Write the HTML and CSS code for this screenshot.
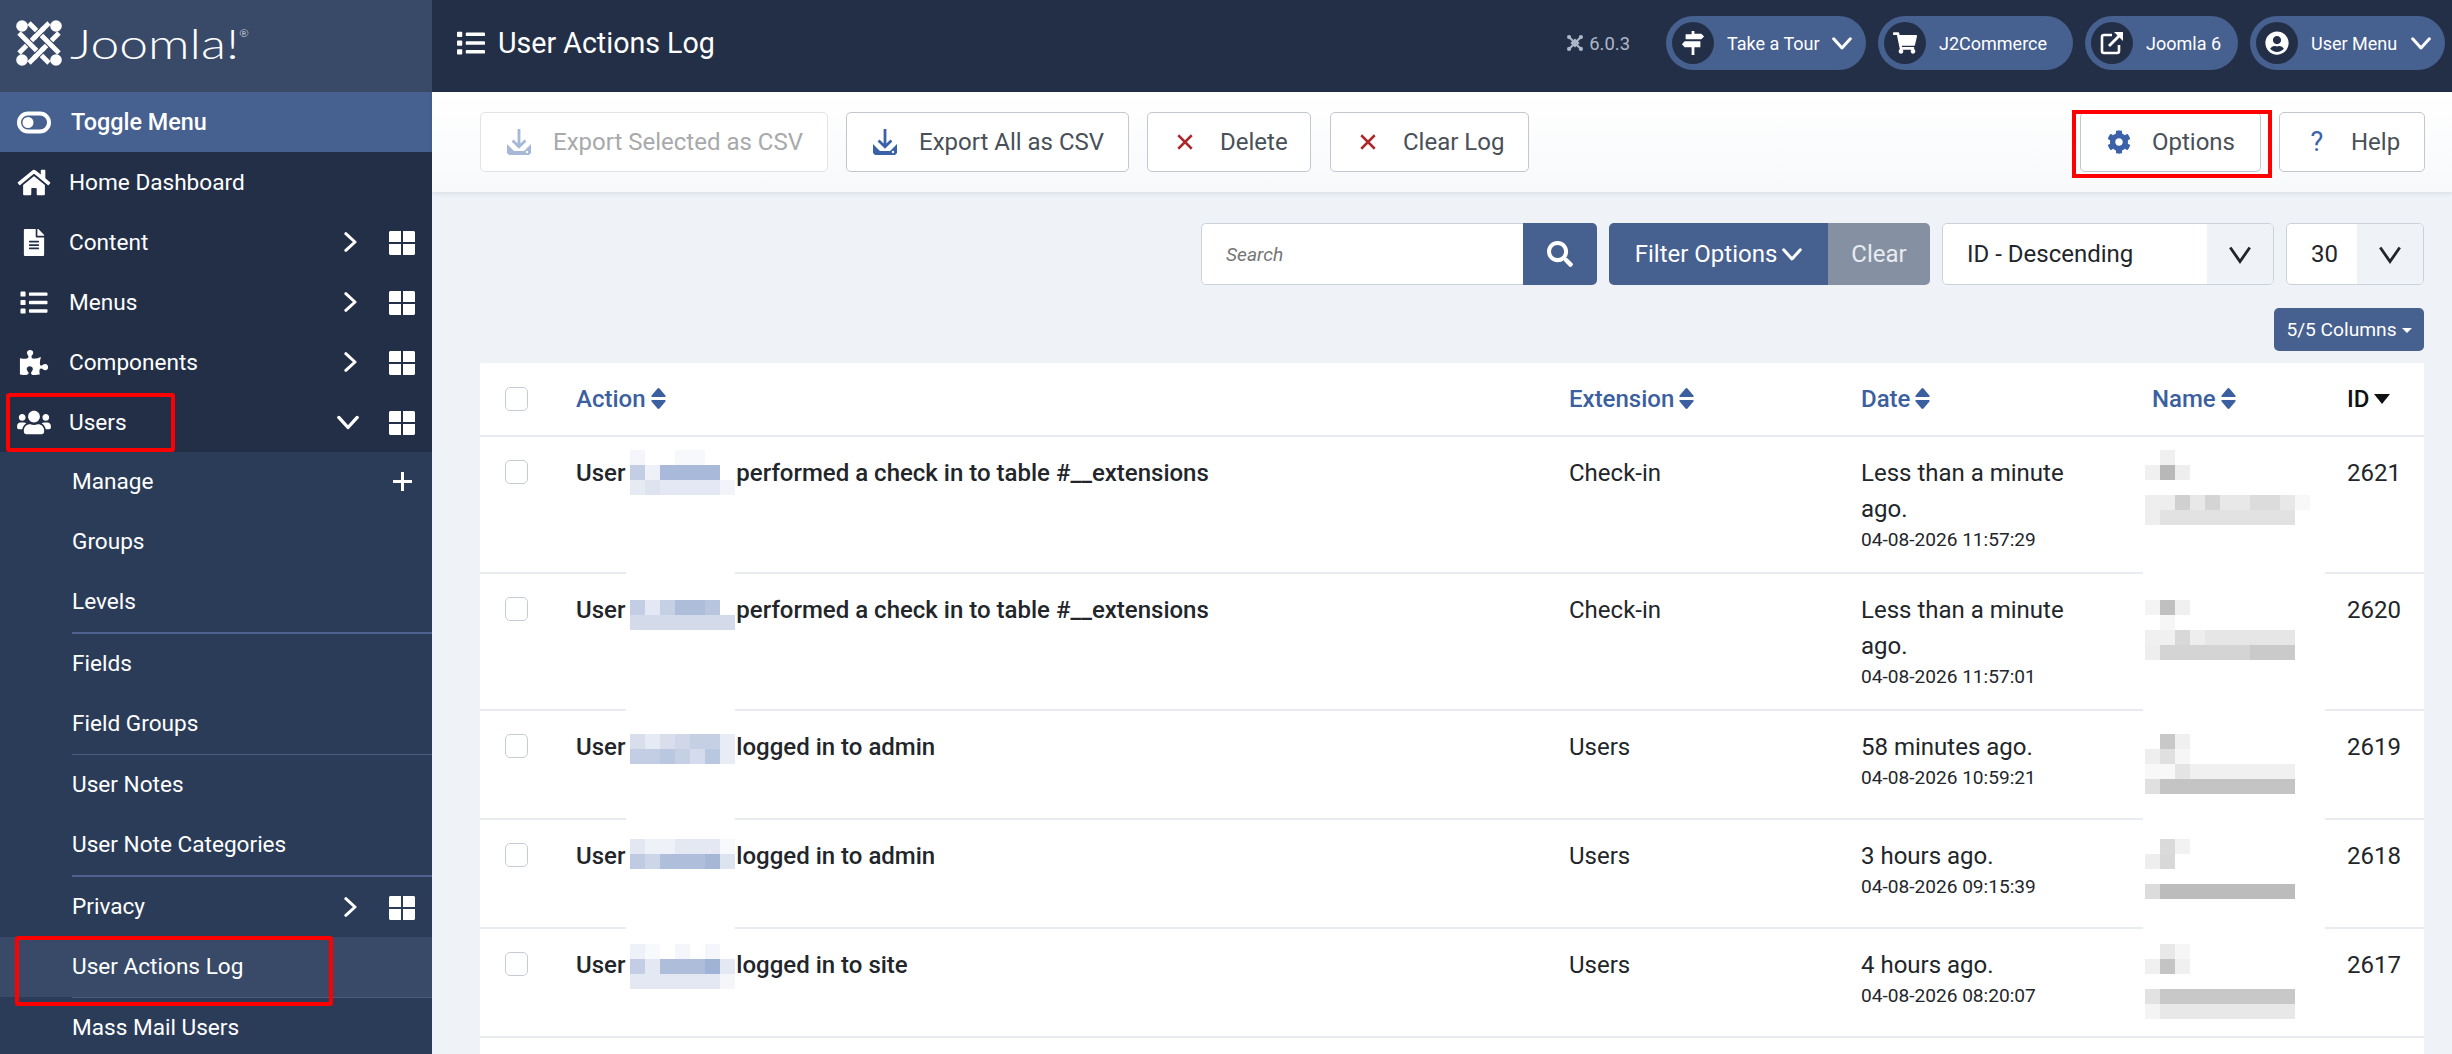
FILE: index.html
```html
<!DOCTYPE html>
<html lang="en">
<head>
	<meta charset="UTF-8">
	<title>User Actions Log</title>
	<link rel="stylesheet" href="styles.css">
</head>
<body>
	<svg class="defs" width="0" height="0">
		<symbol id="i-list" viewBox="0 0 512 512"><path d="M80 368H16a16 16 0 0 0-16 16v64a16 16 0 0 0 16 16h64a16 16 0 0 0 16-16v-64a16 16 0 0 0-16-16zm0-320H16A16 16 0 0 0 0 64v64a16 16 0 0 0 16 16h64a16 16 0 0 0 16-16V64a16 16 0 0 0-16-16zm0 160H16a16 16 0 0 0-16 16v64a16 16 0 0 0 16 16h64a16 16 0 0 0 16-16v-64a16 16 0 0 0-16-16zm416 176H176a16 16 0 0 0-16 16v32a16 16 0 0 0 16 16h320a16 16 0 0 0 16-16v-32a16 16 0 0 0-16-16zm0-320H176a16 16 0 0 0-16 16v32a16 16 0 0 0 16 16h320a16 16 0 0 0 16-16V80a16 16 0 0 0-16-16zm0 160H176a16 16 0 0 0-16 16v32a16 16 0 0 0 16 16h320a16 16 0 0 0 16-16v-32a16 16 0 0 0-16-16z"/></symbol>
		<symbol id="i-right" viewBox="0 0 24 24"><path d="M7 2l11 10L7 22" fill="none" stroke="currentColor" stroke-width="3.6" stroke-linecap="round" stroke-linejoin="round"/></symbol>
		<symbol id="i-down" viewBox="0 0 24 24"><path d="M2 7l10 11L22 7" fill="none" stroke="currentColor" stroke-width="3.6" stroke-linecap="round" stroke-linejoin="round"/></symbol>
		<symbol id="i-down-thin" viewBox="0 0 24 24"><path d="M3 6l9 13 9-13" fill="none" stroke="currentColor" stroke-width="2.600"/></symbol>
		<symbol id="i-grid" viewBox="0 0 26 24"><path d="M1 0h11v11H0V1zM14 0h11l1 1v10H14zM0 13h12v11H1l-1-1zM14 13h12v10l-1 1H14z"/></symbol>
		<symbol id="i-down-load" viewBox="0 0 24 26"><path d="M10.6 0h2.800v14.500l4.100-4 1.900 1.900-7.400 7.300-7.400-7.300 1.900-1.900 4.100 4z"/><path d="M0 15l7 7h10l7-7v9l-2 2H2l-2-2z"/><circle cx="20" cy="23" r="1.200" fill="#fff"/></symbol>
		<symbol id="i-x" viewBox="0 0 16 16"><path d="M2 2l12 12M14 2L2 14" fill="none" stroke="currentColor" stroke-width="2.200"/></symbol>
		<symbol id="i-updown" viewBox="0 0 15 21"><path d="M7.500 0l1 .4L14.800 8l-.6 1H.8l-.6-1L6.500.4zM.8 12h13.400l.6 1-6.300 7.600-1 .4-1-.4L.2 13z"/></symbol>
	</svg>

	<div class="app">
		<aside class="sidebar">
			<div class="brand">
				<svg class="joomla-mark" viewBox="0 0 46 46">
					<g fill="none">
						<path class="weave-edge" d="M43 13L13 43M33 3L3 33"/>
						<path class="weave-line" d="M43 13L13 43M33 3L3 33"/>
						<path class="weave-edge" d="M13 3l30 30M3 13l30 30"/>
						<path class="weave-line" d="M13 3l30 30M3 13l30 30"/>
						<path class="weave-edge" d="M26 30l-6 6M26 10l-6 6"/>
						<path class="weave-line" d="M28 28L18 38M28 8L18 18"/>
					</g>
					<g fill="#fff"><circle cx="6" cy="6" r="5.800"/><circle cx="40" cy="6" r="5.800"/><circle cx="6" cy="40" r="5.800"/><circle cx="40" cy="40" r="5.800"/></g>
				</svg>
				<span class="joomla-word">Joomla!<sup>®</sup></span>
			</div>
			<nav>
				<a class="nav-row toggle">
					<svg class="nav-ico" viewBox="-1 -2.500 36 27"><path fill-rule="evenodd" d="M11 0h12a11 11 0 0 1 0 22H11a11 11 0 0 1 0-22zM11 4a7 7 0 0 0 0 14h12a7 7 0 0 0 0-14zM11 5.500a5.500 5.500 0 1 1 0 11 5.500 5.500 0 0 1 0-11z" fill="#fff"/></svg>
					<span class="nav-label toggle-label">Toggle Menu</span>
				</a>
				<a class="nav-row">
					<svg class="nav-ico ico-home" viewBox="0 0 576 512"><path d="M280.37 148.26L96 300.11V464a16 16 0 0 0 16 16l112.06-.29a16 16 0 0 0 15.92-16V368a16 16 0 0 1 16-16h64a16 16 0 0 1 16 16v95.64a16 16 0 0 0 16 16.05L464 480a16 16 0 0 0 16-16V300L295.67 148.26a12.19 12.19 0 0 0-15.3 0zM571.6 251.47L488 182.56V44.05a12 12 0 0 0-12-12h-56a12 12 0 0 0-12 12v72.61L318.47 43a48 48 0 0 0-61 0L4.34 251.47a12 12 0 0 0-1.6 16.9l25.5 31A12 12 0 0 0 45.15 301l235.22-193.74a12.19 12.19 0 0 1 15.3 0L530.9 301a12 12 0 0 0 16.9-1.6l25.5-31a12 12 0 0 0-1.7-16.93z"/></svg>
					<span class="nav-label">Home Dashboard</span>
				</a>
				<a class="nav-row">
					<svg class="nav-ico" viewBox="0 0 384 512"><path d="M224 136V0H24C10.7 0 0 10.7 0 24v464c0 13.3 10.7 24 24 24h336c13.3 0 24-10.7 24-24V160H248c-13.2 0-24-10.8-24-24zm64 236c0 6.600-5.400 12-12 12H108c-6.600 0-12-5.400-12-12v-8c0-6.600 5.400-12 12-12h168c6.600 0 12 5.400 12 12v8zm0-64c0 6.600-5.400 12-12 12H108c-6.600 0-12-5.400-12-12v-8c0-6.600 5.400-12 12-12h168c6.600 0 12 5.400 12 12v8zm0-72v8c0 6.600-5.400 12-12 12H108c-6.600 0-12-5.400-12-12v-8c0-6.600 5.400-12 12-12h168c6.600 0 12 5.400 12 12zm96-114.100v6.100H256V0h6.100c6.400 0 12.500 2.500 17 7l97.900 98c4.500 4.500 7 10.600 7 16.900z"/></svg>
					<span class="nav-label">Content</span>
					<svg class="nav-arrow"><use href="#i-right"/></svg>
					<svg class="nav-grid"><use href="#i-grid"/></svg>
				</a>
				<a class="nav-row">
					<svg class="nav-ico"><use href="#i-list"/></svg>
					<span class="nav-label">Menus</span>
					<svg class="nav-arrow"><use href="#i-right"/></svg>
					<svg class="nav-grid"><use href="#i-grid"/></svg>
				</a>
				<a class="nav-row">
					<svg class="nav-ico ico-puzzle" viewBox="0 0 576 512"><path d="M519.442 288.651c-41.519 0-59.5 31.593-82.058 31.593C377.409 320.244 432 144 432 144s-196.288 80-196.288-3.297c0-35.827 36.288-46.250 36.288-85.985C272 19.216 243.885 0 210.539 0c-34.654 0-66.366 18.891-66.366 56.346 0 41.364 31.711 59.277 31.711 81.750C175.885 207.719 0 166.758 0 166.758v333.237s178.635 41.047 178.635-28.662c0-22.473-40-40.107-40-81.471 0-37.456 29.250-56.346 63.577-56.346 33.673 0 61.788 19.216 61.788 54.717 0 39.735-36.288 50.158-36.288 85.985 0 60.803 129.675 25.730 181.230 25.730 0 0-34.725-120.101 25.827-120.101 35.962 0 46.423 36.152 86.308 36.152C556.712 416 576 387.990 576 354.443c0-34.199-18.962-65.792-56.558-65.792z"/></svg>
					<span class="nav-label">Components</span>
					<svg class="nav-arrow"><use href="#i-right"/></svg>
					<svg class="nav-grid"><use href="#i-grid"/></svg>
				</a>
				<a class="nav-row">
					<svg class="nav-ico" viewBox="0 0 640 512"><path d="M96 224c35.300 0 64-28.700 64-64s-28.700-64-64-64-64 28.700-64 64 28.700 64 64 64zm448 0c35.300 0 64-28.700 64-64s-28.700-64-64-64-64 28.700-64 64 28.700 64 64 64zm32 32h-64c-17.600 0-33.500 7.100-45.100 18.600 40.300 22.100 68.900 62 75.100 109.400h66c17.700 0 32-14.300 32-32v-32c0-35.300-28.700-64-64-64zm-256 0c61.900 0 112-50.100 112-112S381.900 32 320 32 208 82.100 208 144s50.100 112 112 112zm76.800 32h-8.300c-20.800 10-43.900 16-68.500 16s-47.600-6-68.500-16h-8.300C179.600 288 128 339.600 128 403.200V432c0 26.500 21.500 48 48 48h288c26.500 0 48-21.500 48-48v-28.800c0-63.600-51.600-115.200-115.200-115.200zm-223.700-13.400C161.500 263.100 145.600 256 128 256H64c-35.300 0-64 28.700-64 64v32c0 17.700 14.300 32 32 32h65.900c6.300-47.400 34.900-87.300 75.200-109.400z"/></svg>
					<span class="nav-label">Users</span>
					<svg class="nav-arrow nav-arrow-open"><use href="#i-down"/></svg>
					<svg class="nav-grid"><use href="#i-grid"/></svg>
				</a>
			</nav>
			<ul class="subnav">
				<li class="sub-row">Manage<svg class="sub-plus" viewBox="0 0 19 19"><path d="M9.500 0v19M0 9.500h19" fill="none" stroke="#fff" stroke-width="3"/></svg></li>
				<li class="sub-row">Groups</li>
				<li class="sub-row">Levels</li>
				<li class="sub-row sub-line-thick">Fields</li>
				<li class="sub-row">Field Groups</li>
				<li class="sub-row sub-line">User Notes</li>
				<li class="sub-row">User Note Categories</li>
				<li class="sub-row sub-line-thick">Privacy
					<svg class="nav-arrow"><use href="#i-right"/></svg>
					<svg class="nav-grid"><use href="#i-grid"/></svg>
				</li>
				<li class="sub-row sub-active">User Actions Log</li>
				<li class="sub-row sub-line">Mass Mail Users</li>
			</ul>
			<div class="mark mark-users"></div>
			<div class="mark mark-log"></div>
		</aside>

		<div class="main">
			<header class="topbar">
				<svg class="title-ico"><use href="#i-list"/></svg>
				<h1 class="page-title">User Actions Log</h1>
				<span class="version"><svg class="version-mark" viewBox="0 0 46 46"><g fill="#aeb7c7"><circle cx="6" cy="6" r="6"/><circle cx="40" cy="6" r="6"/><circle cx="6" cy="40" r="6"/><circle cx="40" cy="40" r="6"/></g><path d="M6 6l34 34M40 6L6 40M14 23L23 14l9 9-9 9z" fill="none" stroke="#aeb7c7" stroke-width="6"/></svg>6.0.3</span>
				<div class="pills">
					<a class="pill pill-tour">
						<span class="pill-ico"><svg viewBox="0 0 24 26"><path d="M10.500 0h3v3H21l3 3-3 3H4V3.500h6.500zM3 11h17v6.500h-6.500V26h-3v-8.500H3l-3-3.200z"/></svg></span>
						<span class="pill-text">Take a Tour</span>
						<svg class="pill-arrow"><use href="#i-down"/></svg>
					</a>
					<a class="pill pill-shop">
						<span class="pill-ico"><svg viewBox="0 0 576 512"><path d="M528.120 301.319l47.273-208C578.806 78.301 567.391 64 551.990 64H159.208l-9.166-44.810C147.758 8.021 137.930 0 126.529 0H24C10.745 0 0 10.745 0 24v16c0 13.255 10.745 24 24 24h69.883l70.248 343.435C147.325 417.100 136 435.222 136 456c0 30.928 25.072 56 56 56s56-25.072 56-56c0-15.674-6.447-29.835-16.824-40h209.647C430.447 426.165 424 440.326 424 456c0 30.928 25.072 56 56 56s56-25.072 56-56c0-22.172-12.888-41.332-31.579-50.405l5.517-24.276c3.413-15.018-8.002-29.319-23.403-29.319H218.117l-6.545-32h293.145c11.206 0 20.920-7.754 23.403-18.681z"/></svg></span>
						<span class="pill-text">J2Commerce</span>
					</a>
					<a class="pill pill-joomla">
						<span class="pill-ico"><svg viewBox="0 0 24 24"><path d="M12 4H4a2 2 0 0 0-2 2v14a2 2 0 0 0 2 2h13a2 2 0 0 0 2-2v-6" fill="none" stroke="#fff" stroke-width="2.600"/><path d="M9 15L20 4" fill="none" stroke="#fff" stroke-width="2.800"/><path d="M14 1h9v9z"/></svg></span>
						<span class="pill-text">Joomla 6</span>
					</a>
					<a class="pill pill-user">
						<span class="pill-ico"><svg viewBox="0 0 496 512"><path d="M248 8C111 8 0 119 0 256s111 248 248 248 248-111 248-248S385 8 248 8zm0 96c48.600 0 88 39.400 88 88s-39.400 88-88 88-88-39.400-88-88 39.400-88 88-88zm0 344c-58.700 0-111.300-26.600-146.500-68.200 18.800-35.400 55.600-59.800 98.500-59.800 2.400 0 4.800.4 7.100 1.100 13 4.200 26.600 6.900 40.900 6.900 14.300 0 28-2.700 40.900-6.900 2.300-.7 4.700-1.100 7.100-1.100 42.900 0 79.700 24.400 98.500 59.800C359.300 421.400 306.700 448 248 448z"/></svg></span>
						<span class="pill-text">User Menu</span>
						<svg class="pill-arrow"><use href="#i-down"/></svg>
					</a>
				</div>
			</header>

			<div class="toolbar">
				<button class="btn btn-export-sel" type="button"><svg class="btn-ico ico-blue"><use href="#i-down-load"/></svg>Export Selected as CSV</button>
				<button class="btn btn-export-all" type="button"><svg class="btn-ico ico-blue"><use href="#i-down-load"/></svg>Export All as CSV</button>
				<button class="btn btn-delete" type="button"><svg class="btn-ico ico-x"><use href="#i-x"/></svg>Delete</button>
				<button class="btn btn-clear" type="button"><svg class="btn-ico ico-x"><use href="#i-x"/></svg>Clear Log</button>
				<span class="toolbar-space"></span>
				<button class="btn btn-options" type="button"><svg class="btn-ico ico-cog" viewBox="0 0 512 512"><path d="M487.400 315.700l-42.600-24.600c4.300-23.200 4.300-47 0-70.200l42.600-24.600c4.900-2.800 7.100-8.600 5.500-14-11.100-35.600-30-67.800-54.700-94.600-3.800-4.100-10-5.100-14.800-2.300L380.800 110c-17.900-15.400-38.500-27.300-60.800-35.100V25.800c0-5.600-3.900-10.500-9.400-11.700-36.700-8.200-74.300-7.800-109.200 0-5.500 1.200-9.400 6.100-9.400 11.700V75c-22.200 7.900-42.800 19.800-60.800 35.100L88.700 85.500c-4.900-2.800-11-1.900-14.800 2.300-24.700 26.700-43.600 58.900-54.700 94.600-1.700 5.400.6 11.200 5.500 14L67.300 221c-4.300 23.200-4.300 47 0 70.200l-42.600 24.600c-4.900 2.800-7.100 8.600-5.500 14 11.100 35.600 30 67.800 54.700 94.600 3.800 4.100 10 5.100 14.800 2.300l42.600-24.600c17.900 15.400 38.500 27.300 60.800 35.100v49.200c0 5.600 3.900 10.500 9.400 11.700 36.700 8.200 74.300 7.800 109.200 0 5.500-1.200 9.400-6.100 9.400-11.700v-49.200c22.200-7.900 42.800-19.800 60.800-35.100l42.600 24.600c4.900 2.800 11 1.900 14.800-2.300 24.700-26.700 43.600-58.900 54.700-94.600 1.500-5.500-.7-11.300-5.600-14.100zM256 336c-44.100 0-80-35.900-80-80s35.900-80 80-80 80 35.900 80 80-35.900 80-80 80z"/></svg>Options</button>
				<button class="btn btn-help" type="button"><span class="help-mark">?</span>Help</button>
				<div class="mark mark-options"></div>
			</div>

			<div class="content">
				<div class="filters">
					<div class="search">
						<input class="search-input" type="text" placeholder="Search">
						<button class="search-btn" type="button"><svg viewBox="0 0 512 512"><path d="M505 442.700L405.300 343c-4.500-4.500-10.600-7-17-7H372c27.600-35.300 44-79.700 44-128C416 93.100 322.900 0 208 0S0 93.100 0 208s93.100 208 208 208c48.300 0 92.700-16.400 128-44v16.300c0 6.400 2.500 12.500 7 17l99.700 99.700c9.400 9.400 24.600 9.400 33.900 0l28.300-28.300c9.400-9.400 9.400-24.600.1-34zM208 336c-70.700 0-128-57.200-128-128 0-70.700 57.200-128 128-128 70.700 0 128 57.200 128 128 0 70.700-57.200 128-128 128z"/></svg></button>
					</div>
					<div class="filter-group">
						<button class="filter-btn" type="button">Filter Options<svg class="filter-arrow"><use href="#i-down"/></svg></button>
						<button class="clear-btn" type="button">Clear</button>
					</div>
					<div class="select select-order"><span class="select-value">ID - Descending</span><span class="select-arrow"><svg><use href="#i-down-thin"/></svg></span></div>
					<div class="select select-limit"><span class="select-value">30</span><span class="select-arrow"><svg><use href="#i-down-thin"/></svg></span></div>
				</div>
				<div class="columns-row"><button class="columns-btn" type="button">5/5 Columns<span class="caret"></span></button></div>

				<table class="log-table">
					<colgroup><col class="c-check"><col class="c-action"><col class="c-ext"><col class="c-date"><col class="c-name"><col class="c-id"></colgroup>
					<thead>
						<tr>
							<th><span class="check"></span></th>
							<th class="sortable">Action<svg class="sort-ico"><use href="#i-updown"/></svg></th>
							<th class="sortable">Extension<svg class="sort-ico"><use href="#i-updown"/></svg></th>
							<th class="sortable">Date<svg class="sort-ico"><use href="#i-updown"/></svg></th>
							<th class="sortable">Name<svg class="sort-ico"><use href="#i-updown"/></svg></th>
							<th class="sorted">ID<span class="sort-down"></span></th>
						</tr>
					</thead>
					<tbody>
						<tr class="row-tall">
							<td><span class="check"></span></td>
							<td class="action">User <span class="user-blur"><svg class="mosaic mosaic-user" viewBox="-4 0 109 60"><rect y="15" width="15" height="15" fill="#f4f6fb"/><rect x="45" y="15" width="30" height="15" fill="#f6f8fc"/><rect y="30" width="15" height="15" fill="#c3cde3"/><rect x="15" y="30" width="15" height="15" fill="#eef1f8"/><rect x="30" y="30" width="60" height="15" fill="#a9b9da"/><rect y="45" width="15" height="15" fill="#e6eaf3"/><rect x="15" y="45" width="15" height="15" fill="#dde3ef"/><rect x="30" y="45" width="60" height="15" fill="#e3e8f4"/><rect x="90" y="45" width="15" height="15" fill="#f2f4fa"/></svg></span>performed a check in to table #__extensions</td>
							<td>Check-in</td>
							<td class="date">Less than a minute ago.<div class="stamp">04-08-2026 11:57:29</div></td>
							<td class="name"><svg class="mosaic mosaic-name" viewBox="-2 0 182 90"><rect x="15" y="15" width="15" height="15" fill="#f0f0f0"/><rect y="30" width="15" height="15" fill="#f0f0f0"/><rect x="15" y="30" width="15" height="15" fill="#b8b8b8"/><rect x="30" y="30" width="15" height="15" fill="#eee"/><rect y="60" width="30" height="15" fill="#eee"/><rect x="30" y="60" width="15" height="15" fill="#d0d0d0"/><rect x="45" y="60" width="15" height="15" fill="#e8e8e8"/><rect x="60" y="60" width="15" height="15" fill="#d4d4d4"/><rect x="75" y="60" width="30" height="15" fill="#e8e8e8"/><rect x="105" y="60" width="30" height="15" fill="#dcdcdc"/><rect x="135" y="60" width="15" height="15" fill="#e8e8e8"/><rect x="150" y="60" width="15" height="15" fill="#f8f8f8"/><rect y="75" width="15" height="15" fill="#eee"/><rect x="15" y="75" width="135" height="15" fill="#e2e2e2"/></svg></td>
							<td>2621</td>
						</tr>
						<tr class="row-tall">
							<td><span class="check"></span></td>
							<td class="action">User <span class="user-blur"><svg class="mosaic mosaic-user" viewBox="-4 0 109 58"><rect x="-4" width="109" height="4" fill="#fff"/><rect y="28" width="15" height="15" fill="#c3cde3"/><rect x="15" y="28" width="15" height="15" fill="#e3e8f4"/><rect x="30" y="28" width="15" height="15" fill="#c6d0e5"/><rect x="45" y="28" width="30" height="15" fill="#aebdda"/><rect x="75" y="28" width="15" height="15" fill="#b9c5de"/><rect y="43" width="105" height="15" fill="#d3daea"/></svg></span>performed a check in to table #__extensions</td>
							<td>Check-in</td>
							<td class="date">Less than a minute ago.<div class="stamp">04-08-2026 11:57:01</div></td>
							<td class="name"><svg class="mosaic mosaic-name" viewBox="-2 0 182 88"><rect x="-2" width="182" height="4" fill="#fff"/><rect y="28" width="15" height="15" fill="#f4f4f4"/><rect x="15" y="28" width="15" height="15" fill="#c0c0c0"/><rect x="30" y="28" width="15" height="15" fill="#f0f0f0"/><rect x="15" y="43" width="15" height="15" fill="#f6f6f6"/><rect y="58" width="30" height="15" fill="#f0f0f0"/><rect x="30" y="58" width="15" height="15" fill="#d8d8d8"/><rect x="45" y="58" width="15" height="15" fill="#eee"/><rect x="60" y="58" width="90" height="15" fill="#e6e6e6"/><rect y="73" width="15" height="15" fill="#eee"/><rect x="15" y="73" width="135" height="15" fill="#d4d4d4"/><rect x="105" y="73" width="45" height="15" fill="#cacaca"/></svg></td>
							<td>2620</td>
						</tr>
						<tr class="row-short">
							<td><span class="check"></span></td>
							<td class="action">User <span class="user-blur"><svg class="mosaic mosaic-user" viewBox="-4 0 109 55"><rect x="-4" width="109" height="4" fill="#fff"/><rect y="25" width="15" height="15" fill="#d8deec"/><rect x="15" y="25" width="15" height="15" fill="#e6eaf4"/><rect x="30" y="25" width="15" height="15" fill="#d8deec"/><rect x="45" y="25" width="15" height="15" fill="#cfd7e8"/><rect x="60" y="25" width="30" height="15" fill="#c6d0e5"/><rect x="90" y="25" width="15" height="30" fill="#e8ecf5"/><rect y="40" width="30" height="15" fill="#c3cee4"/><rect x="30" y="40" width="15" height="15" fill="#bac7e0"/><rect x="45" y="40" width="15" height="15" fill="#c6d0e5"/><rect x="60" y="40" width="15" height="15" fill="#d3dbec"/><rect x="75" y="40" width="15" height="15" fill="#bac7e0"/></svg></span>logged in to admin</td>
							<td>Users</td>
							<td class="date">58 minutes ago.<div class="stamp">04-08-2026 10:59:21</div></td>
							<td class="name"><svg class="mosaic mosaic-name" viewBox="-2 0 182 85"><rect x="-2" width="182" height="4" fill="#fff"/><rect x="15" y="25" width="15" height="15" fill="#c8c8c8"/><rect x="30" y="25" width="15" height="15" fill="#f0f0f0"/><rect y="40" width="15" height="15" fill="#eee"/><rect x="15" y="40" width="15" height="15" fill="#e0e0e0"/><rect x="30" y="40" width="15" height="15" fill="#f6f6f6"/><rect y="55" width="30" height="15" fill="#f8f8f8"/><rect x="30" y="55" width="15" height="15" fill="#e4e4e4"/><rect x="45" y="55" width="105" height="15" fill="#f0f0f0"/><rect y="70" width="15" height="15" fill="#e0e0e0"/><rect x="15" y="70" width="135" height="15" fill="#c4c4c4"/></svg></td>
							<td>2619</td>
						</tr>
						<tr class="row-short">
							<td><span class="check"></span></td>
							<td class="action">User <span class="user-blur"><svg class="mosaic mosaic-user" viewBox="-4 0 109 51"><rect x="-4" width="109" height="4" fill="#fff"/><rect y="21" width="15" height="15" fill="#e3e7f1"/><rect x="15" y="21" width="30" height="15" fill="#eef1f8"/><rect x="45" y="21" width="45" height="15" fill="#e3e8f2"/><rect x="90" y="21" width="15" height="15" fill="#f8f9fc"/><rect y="36" width="15" height="15" fill="#bfcbe2"/><rect x="15" y="36" width="15" height="15" fill="#cdd6e8"/><rect x="30" y="36" width="45" height="15" fill="#afbedb"/><rect x="75" y="36" width="15" height="15" fill="#a5b6d7"/><rect x="90" y="36" width="15" height="15" fill="#dde3ef"/></svg></span>logged in to admin</td>
							<td>Users</td>
							<td class="date">3 hours ago.<div class="stamp">04-08-2026 09:15:39</div></td>
							<td class="name"><svg class="mosaic mosaic-name" viewBox="-2 0 182 81"><rect x="-2" width="182" height="4" fill="#fff"/><rect x="15" y="21" width="15" height="15" fill="#dadada"/><rect x="30" y="21" width="15" height="15" fill="#f2f2f2"/><rect y="36" width="15" height="15" fill="#eee"/><rect x="15" y="36" width="15" height="15" fill="#d8d8d8"/><rect y="66" width="15" height="15" fill="#dcdcdc"/><rect x="15" y="66" width="135" height="15" fill="#bcbcbc"/></svg></td>
							<td>2618</td>
						</tr>
						<tr class="row-short">
							<td><span class="check"></span></td>
							<td class="action">User <span class="user-blur"><svg class="mosaic mosaic-user" viewBox="-4 0 109 62"><rect x="-4" width="109" height="4" fill="#fff"/><rect y="17" width="15" height="15" fill="#eef1f7"/><rect x="15" y="17" width="15" height="15" fill="#f8f9fc"/><rect x="45" y="17" width="15" height="15" fill="#f4f6fb"/><rect x="75" y="17" width="15" height="15" fill="#f4f6fb"/><rect y="32" width="15" height="15" fill="#c3cde3"/><rect x="15" y="32" width="15" height="15" fill="#e3e8f2"/><rect x="30" y="32" width="45" height="15" fill="#aebdda"/><rect x="75" y="32" width="15" height="15" fill="#a0b2d5"/><rect x="90" y="32" width="15" height="15" fill="#e3e8f2"/><rect y="47" width="90" height="15" fill="#e3e8f2"/><rect x="90" y="47" width="15" height="15" fill="#f4f6fa"/></svg></span>logged in to site</td>
							<td>Users</td>
							<td class="date">4 hours ago.<div class="stamp">04-08-2026 08:20:07</div></td>
							<td class="name"><svg class="mosaic mosaic-name" viewBox="-2 0 182 92"><rect x="-2" width="182" height="4" fill="#fff"/><rect x="15" y="17" width="15" height="15" fill="#e8e8e8"/><rect x="30" y="17" width="15" height="15" fill="#f6f6f6"/><rect y="32" width="15" height="15" fill="#f0f0f0"/><rect x="15" y="32" width="15" height="15" fill="#c4c4c4"/><rect x="30" y="32" width="15" height="15" fill="#f0f0f0"/><rect y="62" width="15" height="15" fill="#e2e2e2"/><rect x="15" y="62" width="135" height="15" fill="#c8c8c8"/><rect y="77" width="15" height="15" fill="#f4f4f4"/><rect x="15" y="77" width="135" height="15" fill="#e8e8e8"/></svg></td>
							<td>2617</td>
						</tr>
						<tr class="row-more"><td colspan="6"></td></tr>
					</tbody>
				</table>
			</div>
		</div>
	</div>
</body>
</html>
```

FILE: styles.css
```css
/* reset */
html,body{ margin:0; padding:0; height:100%; overflow:hidden;}
body{ font-family:"Roboto","Liberation Sans",sans-serif; font-size:24px; color:#22262a; background:#eff3f8;}
ul{ margin:0; padding:0; list-style:none;}
h1{ margin:0; font-weight:400;}
button{ font-family:inherit; cursor:pointer;}
svg{ display:block; fill:currentColor;}
.defs{ position:absolute;}

.app{ display:flex; height:1054px;}

/* sidebar */
.sidebar{ position:relative; flex:0 0 432px; background:#2b3c58; color:#fff; overflow:hidden;}
.brand{ display:flex; align-items:center; height:92px; padding:0 0 6px 16px; background:#384a68; box-sizing:border-box;}
.joomla-mark{ width:46px; height:46px;}
.weave-edge{ stroke:#384a68; stroke-width:6.8;}
.weave-line{ stroke:#fff; stroke-width:4.8;}
.joomla-word{ margin-left:8px; font-family:"Lato",sans-serif; font-weight:300; font-size:41px; line-height:1; transform:scaleX(1.26); transform-origin:left center; position:relative;}
.joomla-word sup{ font-size:9px; vertical-align:22px; line-height:0;}
.nav-row{ display:flex; align-items:center; height:60px; padding-left:16px; background:#232f47; position:relative;}
.toggle{ background:#46608f;}
.nav-ico{ width:36px; height:27px; flex:none;}
.ico-home{ height:29px;}
.ico-puzzle{ height:25px;}
.nav-label{ margin-left:17px; flex:1; font-size:22.6px;}
.toggle-label{ margin-left:19px; font-weight:500; font-size:23.4px;}
.nav-arrow{ position:absolute; right:72px; top:50%; width:20px; height:20px; margin-top:-10px;}
.nav-arrow-open{ right:73px; width:22px; height:22px; margin-top:-11px;}
.nav-grid{ position:absolute; right:17px; top:50%; width:26px; height:24px; margin-top:-11px;}
.sub-row{ position:relative; height:60px; line-height:59px; margin-left:72px; font-size:22.6px;}
.sub-row .nav-arrow{ right:72px;}
.sub-plus{ position:absolute; right:20px; top:20px; width:19px; height:19px;}
.sub-line{ border-top:1px solid #4a5d80;}
.sub-line-thick{ border-top:2px solid #4f628f;}
.sub-active{ margin-left:0; padding-left:72px; background:#384a68;}
.mark{ position:absolute; border:4px solid #f00; border-radius:3px; box-sizing:border-box;}
.mark-users{ left:6px; top:393px; width:169px; height:59px;}
.mark-log{ left:15px; top:936px; width:318px; height:70px;}
.mark-options{ right:180px; top:18px; width:200px; height:68px; border-radius:0;}

/* main */
.main{ flex:1; min-width:0; display:flex; flex-direction:column;}
.topbar{ display:flex; align-items:center; height:92px; flex:none; padding:0 0 6px 25px; box-sizing:border-box; background:#232f47; color:#fff;}
.title-ico{ width:28px; height:28px;}
.page-title{ margin-left:13px; font-size:28.6px; flex:1;}
.version{ display:flex; align-items:center; font-size:18.4px; color:#aeb7c7; margin-right:36px;}
.version-mark{ width:16px; height:16px; margin-right:6px;}
.pills{ display:flex; gap:12px; margin-right:7px;}
.pill{ display:flex; align-items:center; height:54px; padding:0 6px; border-radius:27px; background:#46608f; box-sizing:border-box; font-size:18px;}
.pill-tour{ width:200px;}
.pill-shop{ width:195px;}
.pill-joomla{ width:153px;}
.pill-user{ width:195px;}
.pill-ico{ display:flex; align-items:center; justify-content:center; flex:none; width:42px; height:42px; border-radius:50%; background:#232f47;}
.pill-ico svg{ width:24px; height:24px;}
.pill-text{ margin-left:13px; flex:1;}
.pill-arrow{ width:20px; height:20px; margin-right:8px;}

.toolbar{ position:relative; display:flex; align-items:center; gap:18px; height:100px; flex:none; padding:0 27px 0 48px; box-sizing:border-box; background:linear-gradient(#fff,#f7f9fb); box-shadow:0 2px 4px rgba(40,60,90,.1);}
.toolbar-space{ flex:1;}
.btn{ display:flex; align-items:center; height:60px; padding:0; background:#fff; border:1px solid #c3c8cf; border-radius:5px; font-size:24px; color:#495057; box-sizing:border-box;}
.btn-export-sel{ width:348px; padding-left:26px; color:#a8a9ab; border-color:#e2e4e8;}
.btn-export-sel .btn-ico{ opacity:.45;}
.btn-export-all{ width:283px; padding-left:26px;}
.btn-delete{ width:164px; padding-left:28px;}
.btn-clear{ width:199px; padding-left:28px; margin-left:1px;}
.btn-options{ width:181px; padding-left:26px;}
.btn-help{ width:146px; padding-left:27px;}
.btn-ico{ width:24px; height:26px; margin-right:22px;}
.ico-blue{ color:#3b62a8;}
.ico-x{ width:18px; height:18px; color:#a9292c; margin-right:26px;}
.ico-cog{ color:#3b62a8; margin-right:21px;}
.help-mark{ width:20px; color:#3b62a8; font-size:27px; margin-right:24px;}

.content{ flex:1; padding:31px 28px 0 48px; min-height:0;}
.filters{ display:flex; justify-content:flex-end; gap:12px; height:62px;}
.search{ display:flex; width:396px;}
.search-input{ flex:1; min-width:0; padding:0 0 0 24px; border:1px solid #ccd2dc; border-right:0; border-radius:5px 0 0 5px; background:#fff; font-family:inherit; font-size:19.2px; font-style:italic; outline:0;}
.search-input::placeholder{ color:#757575;}
.search-btn{ width:74px; padding:0; border:0; background:#46608f; border-radius:0 5px 5px 0; color:#fff;}
.search-btn svg{ width:26px; height:26px; margin:auto;}
.filter-group{ display:flex; width:321px;}
.filter-btn{ display:flex; align-items:center; justify-content:center; width:219px; padding:0; border:0; background:#46608f; border-radius:5px 0 0 5px; color:#fff; font-size:24px;}
.filter-arrow{ width:20px; height:20px; margin-left:5px;}
.clear-btn{ flex:1; padding:0; border:0; background:#8590a3; border-radius:0 5px 5px 0; color:#e8ebf0; font-size:24px;}
.select{ display:flex; height:62px; background:#fff; border:1px solid #ccd2dc; border-radius:5px; box-sizing:border-box; overflow:hidden; color:#22262a;}
.select-order{ width:332px;}
.select-limit{ width:138px;}
.select-value{ flex:1; line-height:60px; padding-left:24px;}
.select-arrow{ display:flex; align-items:center; justify-content:center; flex:none; width:66px; background:#eff3f8;}
.select-arrow svg{ width:26px; height:26px;}
.columns-row{ display:flex; justify-content:flex-end; margin-top:23px; height:43px;}
.columns-btn{ width:150px; padding:0; border:0; border-radius:5px; background:#46608f; color:#fff; font-size:19.2px;}
.caret{ display:inline-block; margin-left:5px; border:5px solid transparent; border-top-color:#fff; border-bottom:0; vertical-align:3px;}

/* table */
.log-table{ width:1944px; margin-top:12px; table-layout:fixed; border-collapse:separate; border-spacing:0; background:#fff; font-size:24px;}
.c-check{ width:96px;}
.c-action{ width:993px;}
.c-ext{ width:292px;}
.c-date{ width:291px;}
.c-name{ width:195px;}
.c-id{ width:77px;}
.log-table th,.log-table td{ padding:0; border-bottom:2px solid #e8ebef; text-align:left; vertical-align:top; position:relative;}
.log-table th{ height:72px; vertical-align:middle; font-weight:500; box-sizing:content-box;}
.sortable{ color:#3b5f9f;}
.sorted{ color:#111;}
.sort-ico{ display:inline-block; width:15px; height:21px; margin-left:5px; vertical-align:-2px;}
.sort-down{ display:inline-block; margin-left:5px; border:8px solid transparent; border-top:10px solid #111; border-bottom:0; vertical-align:3px;}
.check{ display:block; width:23px; height:24px; margin-left:25px; border:1px solid #c6ccd6; border-radius:5px; box-sizing:border-box; background:#fff;}
.log-table td{ padding-top:18px; line-height:36px; box-sizing:border-box;}
.log-table td .check{ margin-top:5px;}
.row-tall td{ height:137px;}
.row-short td{ height:109px;}
.log-table .row-more td{ height:20px; border-bottom:0; padding:0;}
.action{ font-weight:500; color:#22262a;}
.user-blur{ display:inline-block; width:105px; height:1px;}
.mosaic{ position:absolute; top:-2px; overflow:visible; shape-rendering:crispEdges;}
.mosaic-user{ width:109px; margin-left:-5px; height:auto;}
.mosaic-name{ left:-9px; width:182px; height:auto;}
.log-table .date{ padding-right:60px;}
.stamp{ font-size:19.1px; line-height:26px;}
```
